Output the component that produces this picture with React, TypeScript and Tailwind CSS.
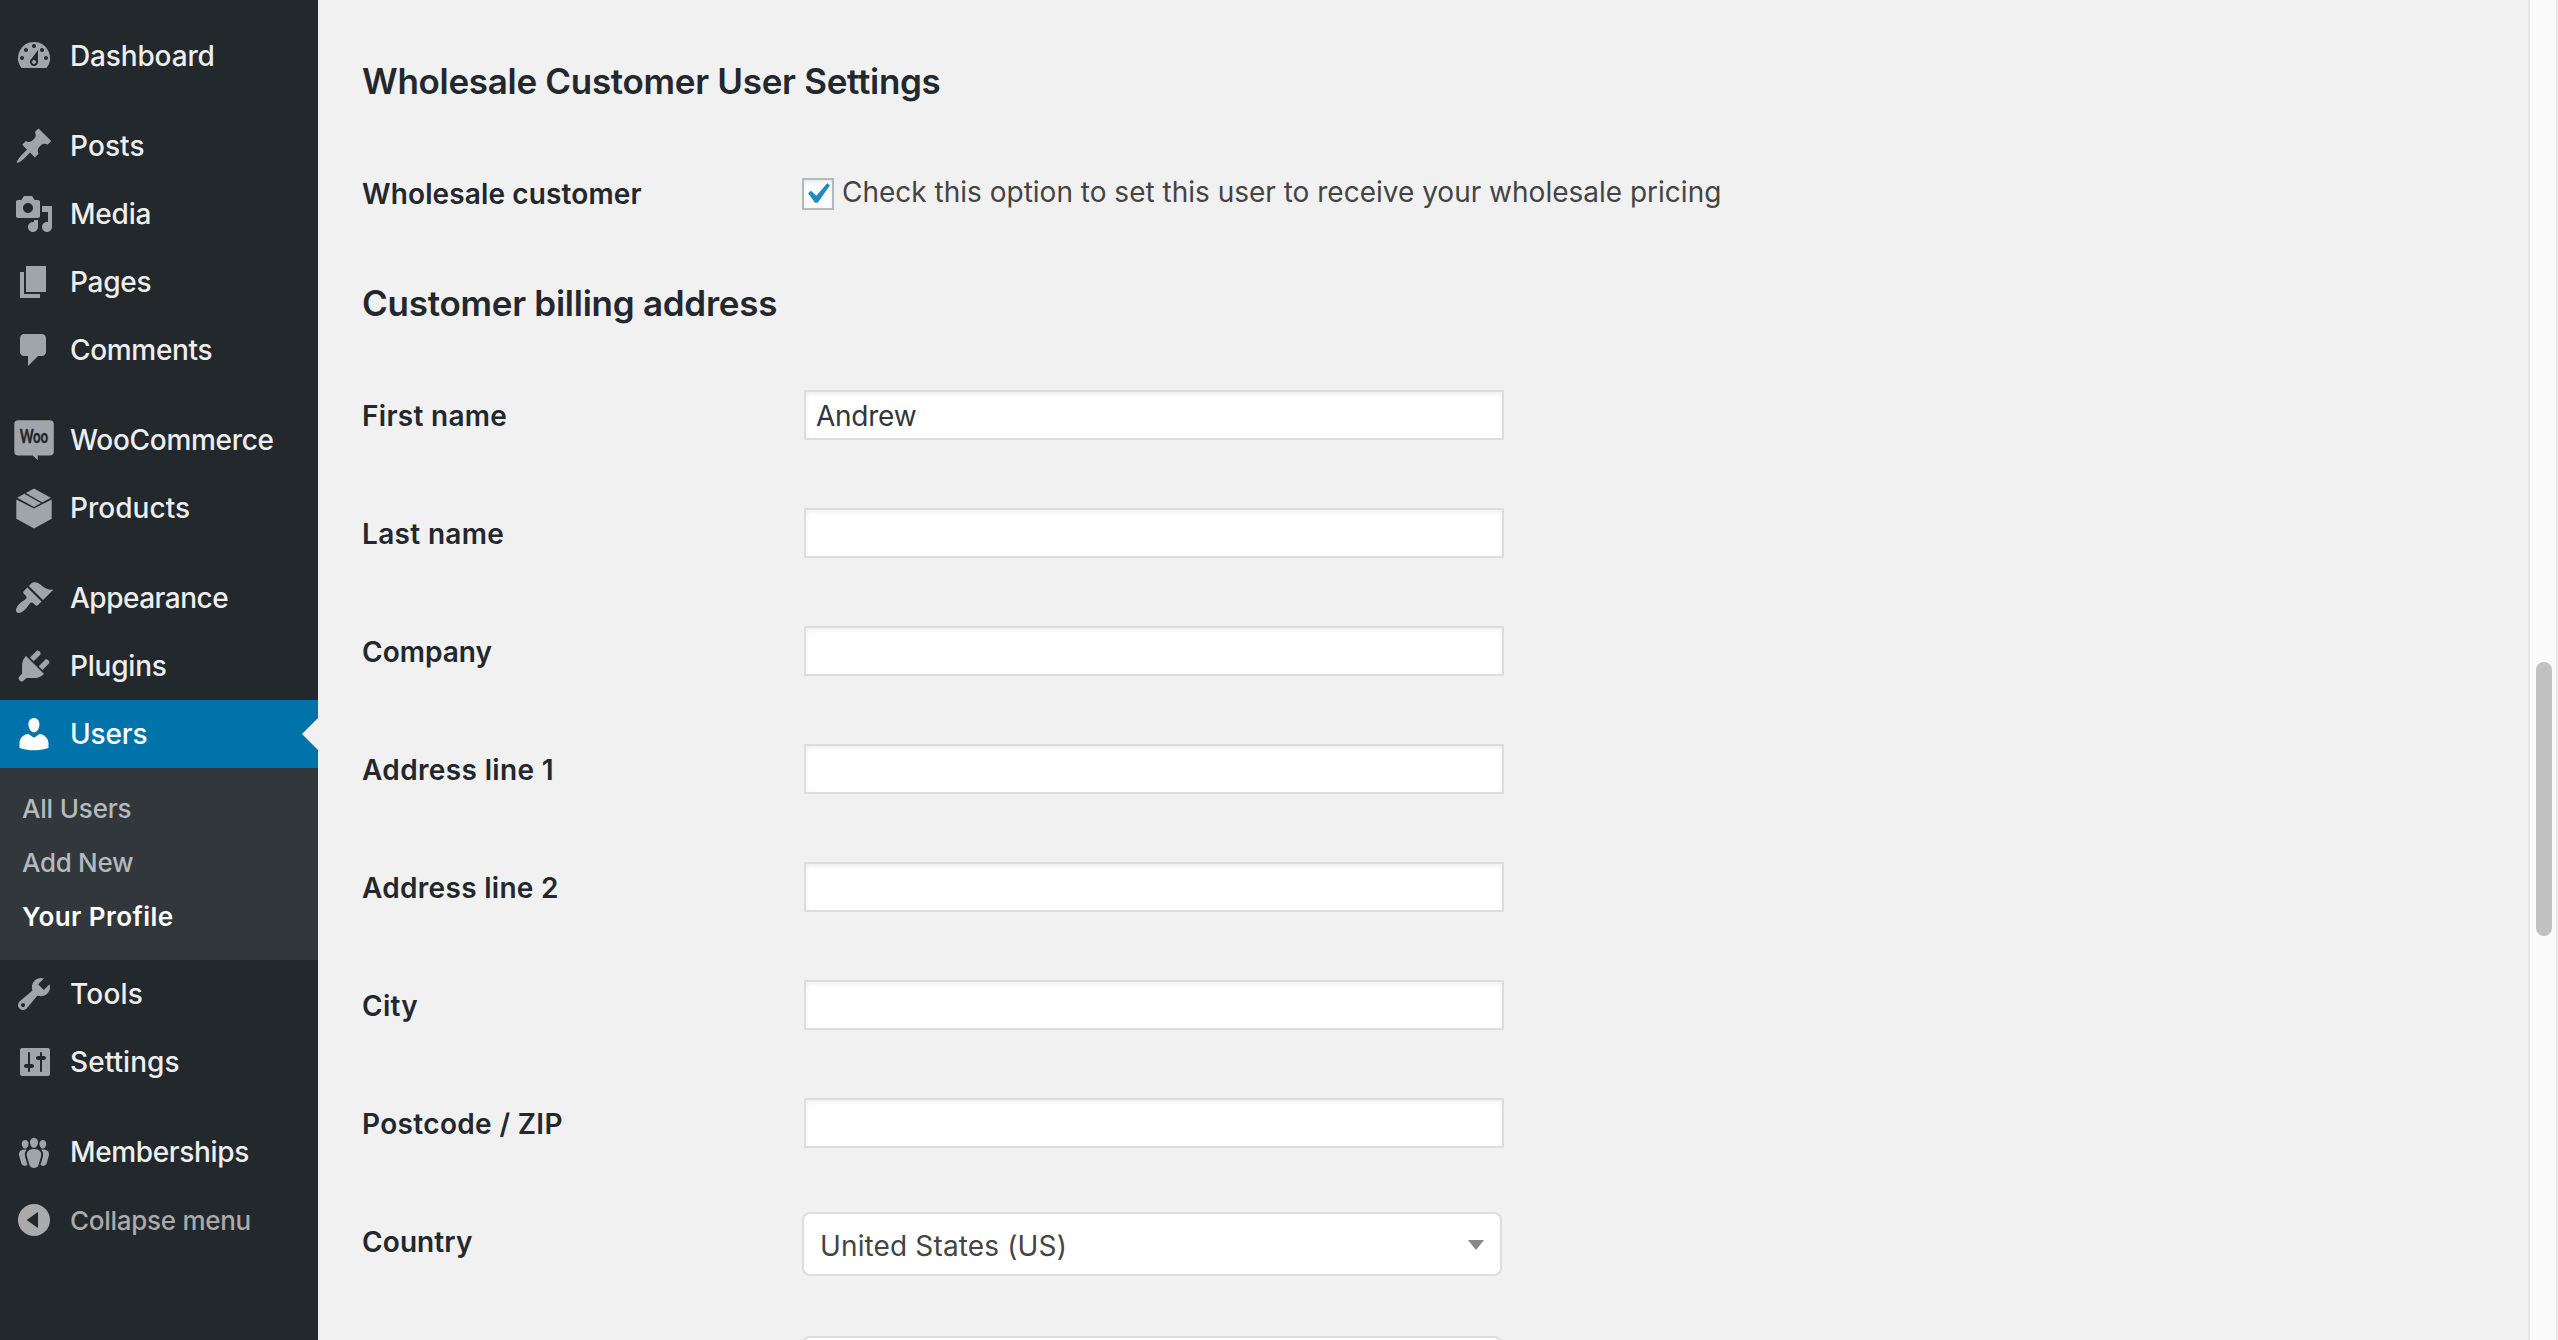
import type { ReactNode } from "react";

const paths = {
  dashboard:
    "M3.76 16h12.48A7.998 7.998 0 0 0 10 3a7.998 7.998 0 0 0-6.24 13zM10 4c.55 0 1 .45 1 1s-.45 1-1 1-1-.45-1-1 .45-1 1-1zM6 6c.55 0 1 .45 1 1s-.45 1-1 1-1-.45-1-1 .45-1 1-1zm8 0c.55 0 1 .45 1 1s-.45 1-1 1-1-.45-1-1 .45-1 1-1zm-5.37 5.55L12 7v6c0 1.1-.9 2-2 2s-2-.9-2-2c0-.57.24-1.08.63-1.45zM4 10c.55 0 1 .45 1 1s-.45 1-1 1-1-.45-1-1 .45-1 1-1zm12 0c.55 0 1 .45 1 1s-.45 1-1 1-1-.45-1-1 .45-1 1-1zm-5 3c0-.55-.45-1-1-1s-1 .45-1 1 .45 1 1 1 1-.45 1-1z",
  posts:
    "M10.44 3.02l1.82-1.82 6.36 6.35-1.83 1.82c-1.05-.68-2.48-.57-3.41.36l-.75.75c-.92.93-1.04 2.35-.35 3.41l-1.83 1.82-2.41-2.41-2.8 2.79c-.42.42-3.38 2.71-3.8 2.29s1.86-3.39 2.28-3.81l2.79-2.79L4.1 9.36l1.83-1.82c1.05.69 2.48.57 3.4-.36l.75-.75c.93-.92 1.05-2.35.36-3.41z",
  media:
    "M13 11V4c0-.55-.45-1-1-1h-1.67L9 1H5L3.67 3H2c-.55 0-1 .45-1 1v7c0 .55.45 1 1 1h10c.55 0 1-.45 1-1zM7 4.5c1.38 0 2.5 1.12 2.5 2.5S8.38 9.5 7 9.5 4.5 8.38 4.5 7 5.62 4.5 7 4.5zM14 6h5v10.5c0 1.38-1.12 2.5-2.5 2.5S14 17.88 14 16.5s1.12-2.5 2.5-2.5c.17 0 .34.02.5.05V9h-3V6zm-4 8.05V13h2v3.5c0 1.38-1.12 2.5-2.5 2.5S7 17.88 7 16.5 8.12 14 9.5 14c.17 0 .34.02.5.05z",
  pages: "M6 15V2h10v13H6zm-1 1h8v2H3V5h2v11z",
  comments: "M5 2h9c1.1 0 2 .9 2 2v7c0 1.1-.9 2-2 2h-2l-5 5v-5H5c-1.1 0-2-.9-2-2V4c0-1.1.9-2 2-2z",
  appearance:
    "M14.48 11.06L7.41 3.99l1.5-1.5c.5-.56 2.3-.47 3.51.32 1.21.8 1.43 1.28 2.91 2.1 1.18.64 2.45 1.26 4.45.85zm-.71.71L6.7 4.7 4.93 6.47c-.39.39-.39 1.02 0 1.41l1.06 1.06c.39.39.39 1.03 0 1.42-.6.6-1.43 1.11-2.21 1.69-.35.26-.7.53-1.01.84C1.43 14.23.4 16.08 1.4 17.07c.99 1 2.84-.03 4.18-1.36.31-.31.58-.66.85-1.02.57-.78 1.08-1.61 1.69-2.21.39-.39 1.02-.39 1.41 0l1.06 1.06c.39.39 1.02.39 1.41 0z",
  plugins:
    "M13.11 4.36L9.87 7.6 8 5.73l3.24-3.24c.35-.34 1.05-.2 1.56.32.52.51.66 1.21.31 1.55zm-8 1.77l.91-1.12 9.01 9.01-1.19.84c-.71.71-2.63 1.16-3.82 1.16H6.14L4.9 17.26c-.59.59-1.54.59-2.12 0-.59-.58-.59-1.53 0-2.12l1.24-1.24v-3.88c0-1.13.4-3.19 1.09-3.89zm7.26 3.97l3.24-3.24c.34-.35 1.04-.21 1.55.31.52.51.66 1.21.31 1.55l-3.24 3.25z",
  users:
    "M10 9.25c-2.27 0-2.73-3.44-2.73-3.44C7 4.02 7.82 2 9.97 2c2.16 0 2.98 2.02 2.71 3.81 0 0-.41 3.44-2.68 3.44zm0 2.57L12.72 10c2.39 0 4.52 2.33 4.52 4.53v2.49s-3.65 1.13-7.24 1.13c-3.65 0-7.24-1.13-7.24-1.13v-2.49c0-2.25 1.94-4.48 4.47-4.48z",
  tools:
    "M16.68 9.77c-1.34 1.34-3.3 1.67-4.95.99l-5.41 6.52c-.99.99-2.59.99-3.58 0s-.99-2.59 0-3.57l6.52-5.42c-.68-1.65-.35-3.61.99-4.95 1.28-1.28 3.12-1.62 4.72-1.06l-2.89 2.89 2.82 2.82 2.86-2.87c.53 1.58.18 3.39-1.08 4.65zM3.81 16.21c.4.39 1.04.39 1.43 0 .4-.4.4-1.04 0-1.43-.39-.4-1.03-.4-1.43 0-.39.39-.39 1.03 0 1.43z",
  settings:
    "M18 16V4c0-.55-.45-1-1-1H4c-.55 0-1 .45-1 1v12c0 .55.45 1 1 1h13c.55 0 1-.45 1-1zM8 11h1c.55 0 1 .45 1 1s-.45 1-1 1H8v1.5c0 .28-.22.5-.5.5s-.5-.22-.5-.5V13H6c-.55 0-1-.45-1-1s.45-1 1-1h1V5.5c0-.28.22-.5.5-.5s.5.22.5.5V11zm5-2h-1c-.55 0-1-.45-1-1s.45-1 1-1h1V5.5c0-.28.22-.5.5-.5s.5.22.5.5V7h1c.55 0 1 .45 1 1s-.45 1-1 1h-1v5.5c0 .28-.22.5-.5.5s-.5-.22-.5-.5V9z",
  memberships:
    "M8.03 4.46c-.29 1.28.55 3.46 1.97 3.46 1.41 0 2.25-2.18 1.96-3.46-.22-.98-1.08-1.63-1.96-1.63-.89 0-1.74.65-1.97 1.63zm-4.13.9c-.25 1.08.47 2.93 1.67 2.93s1.92-1.85 1.67-2.93c-.19-.83-.92-1.39-1.67-1.39s-1.48.56-1.67 1.39zm8.86 0c-.25 1.08.47 2.93 1.66 2.93 1.2 0 1.92-1.85 1.67-2.93-.19-.83-.92-1.39-1.67-1.39-.74 0-1.47.56-1.66 1.39zm-.59 11.43l1.25-4.3C14.2 10 12.71 8.47 10 8.47c-2.72 0-4.21 1.53-3.44 4.02l1.26 4.3C8.05 17.51 9 18 10 18c.98 0 1.94-.49 2.17-1.21zm-6.1-7.63c-.49.67-.96 1.83-.42 3.59l1.12 3.79c-.34.2-.77.31-1.2.31-.85 0-1.65-.41-1.85-1.03l-1.07-3.65c-.65-2.11.61-3.4 2.92-3.4.27 0 .54.02.79.06-.1.1-.2.22-.29.33zm8.35-.39c2.31 0 3.58 1.29 2.92 3.4l-1.07 3.65c-.2.62-1 1.03-1.85 1.03-.43 0-.86-.11-1.2-.31l1.11-3.77c.55-1.78.08-2.94-.42-3.61-.08-.11-.18-.23-.28-.33.25-.04.51-.06.79-.06z",
  collapse: "M10 2a8 8 0 1 0 0 16 8 8 0 0 0 0-16zM12 6v8l-5.7-4z",
};

function Glyph({ d }: { d: string }) {
  return (
    <svg viewBox="0 0 20 20" className="size-10 shrink-0" fill="currentColor" fillRule="evenodd">
      <path d={d} />
    </svg>
  );
}

function WooIcon() {
  return (
    <svg viewBox="0 0 40 40" className="size-10 shrink-0 overflow-visible" fill="currentColor">
      <path d="M4.3 0.2h31.5a4 4 0 0 1 4 4v27.4a4 4 0 0 1-4 4H23.8v4.7l-5-4.7H4.3a4 4 0 0 1-4-4V4.2a4 4 0 0 1 4-4z" />
      <text
        x="5.8"
        y="23.4"
        fontSize="18.5"
        textLength="28.4"
        lengthAdjust="spacingAndGlyphs"
        fill="#23282d"
        stroke="#23282d"
        strokeWidth="0.3"
        fontFamily="Lato, sans-serif"
        fontWeight="900"
      >
        Woo
      </text>
    </svg>
  );
}

function ProductsIcon() {
  return (
    <svg viewBox="0 0 40 40" className="size-10 shrink-0 overflow-visible" fill="currentColor">
      <path d="M2.3 11.6L20 20.6l17.7-9v19.2L20 40.5 2.3 30.8z" />
      <path d="M20 .4l16.8 9.3L20 19 3.2 9.7z" />
      <path d="M11 5.3L28 15" stroke="#23282d" strokeWidth="1.4" fill="none" />
    </svg>
  );
}

function Item({ icon, label, track }: { icon: ReactNode; label: string; track: string }) {
  return (
    <li className="flex h-[68px] items-center gap-4 pl-3.5 text-[#a0a5aa]">
      {icon}
      <span className={`text-[28px] font-medium text-[#eeeeee] ${track}`}>{label}</span>
    </li>
  );
}

function Sidebar() {
  return (
    <nav className="flex h-full w-[318px] shrink-0 flex-col gap-[22px] bg-[#23282d] pt-[22px] whitespace-nowrap">
      <ul>
        <Item icon={<Glyph d={paths.dashboard} />} label="Dashboard" track="tracking-[-0.15px]" />
      </ul>
      <ul>
        <Item icon={<Glyph d={paths.posts} />} label="Posts" track="tracking-[0.1px]" />
        <Item icon={<Glyph d={paths.media} />} label="Media" track="tracking-[-0.21px]" />
        <Item icon={<Glyph d={paths.pages} />} label="Pages" track="tracking-[-0.26px]" />
        <Item icon={<Glyph d={paths.comments} />} label="Comments" track="tracking-[-0.32px]" />
      </ul>
      <ul>
        <Item icon={<WooIcon />} label="WooCommerce" track="tracking-[-0.3px]" />
        <Item icon={<ProductsIcon />} label="Products" track="tracking-[0.03px]" />
      </ul>
      <ul>
        <Item icon={<Glyph d={paths.appearance} />} label="Appearance" track="tracking-[-0.5px]" />
        <Item icon={<Glyph d={paths.plugins} />} label="Plugins" track="tracking-[-0.22px]" />
        <li>
          <div className="relative flex h-[68px] items-center gap-4 bg-[#0073aa] pl-3.5 text-white">
            <Glyph d={paths.users} />
            <span className="text-[28px] font-medium tracking-[-0.14px]">Users</span>
            <span className="absolute top-[18px] right-0 size-0 border-y-16 border-r-16 border-y-transparent border-r-[#f1f1f1]" />
          </div>
          <ul className="h-[192px] bg-[#32373c] pt-3.5 pl-[22px] text-[26px] leading-[54px] font-medium text-[#b4b9be]">
            <li className="tracking-[-0.18px]">All Users</li>
            <li className="tracking-[-0.3px]">Add New</li>
            <li className="font-semibold tracking-[0.45px] text-white">Your Profile</li>
          </ul>
        </li>
        <Item icon={<Glyph d={paths.tools} />} label="Tools" track="tracking-[0.2px]" />
        <Item icon={<Glyph d={paths.settings} />} label="Settings" track="tracking-[0.06px]" />
      </ul>
      <ul>
        <Item icon={<Glyph d={paths.memberships} />} label="Memberships" track="tracking-[-0.36px]" />
        <li className="flex h-[68px] items-center gap-4 pl-3.5 text-[#aaaaaa]">
          <Glyph d={paths.collapse} />
          <span className="text-[26px] font-medium tracking-[-0.28px]">Collapse menu</span>
        </li>
      </ul>
    </nav>
  );
}

const fields = [
  { label: "First name", track: "tracking-[0.3px]", value: "Andrew" },
  { label: "Last name", track: "tracking-[0.33px]", value: "" },
  { label: "Company", track: "tracking-[0.03px]", value: "" },
  { label: "Address line 1", track: "tracking-[0.36px]", value: "" },
  { label: "Address line 2", track: "tracking-[0.3px]", value: "" },
  { label: "City", track: "tracking-[0.3px]", value: "" },
  { label: "Postcode / ZIP", track: "tracking-[0.34px]", value: "" },
];

function Label({ text, track }: { text: string; track: string }) {
  return <span className={`w-[440px] shrink-0 pt-0.5 text-[28px] font-semibold text-[#23282d] ${track}`}>{text}</span>;
}

function Profile() {
  return (
    <main className="h-full grow overflow-hidden pt-14 pl-11 whitespace-nowrap">
      <h2 className="text-[35px] leading-[50px] font-semibold tracking-[-0.3px] text-[#23282d]">
        Wholesale Customer User Settings
      </h2>
      <div className="flex h-[174px] items-center">
        <Label text="Wholesale customer" track="tracking-[0.13px]" />
        <span className="mt-0.5 flex size-8 items-center justify-center border-2 border-[#b4b9be] bg-white text-[#1e8cbe] shadow-[inset_0_2px_4px_rgba(0,0,0,0.1)]">
          <svg viewBox="0 0 20 20" className="mr-0.5 size-[42px] shrink-0" fill="currentColor">
            <path d="M14.83 4.89l1.34.94-5.81 8.38H9.02L5.78 9.67l1.34-1.25 2.57 2.4z" />
          </svg>
        </span>
        <span className="-mt-0.5 ml-2 text-[28px] text-[#444444]">
          Check this option to set this user to receive your wholesale pricing
        </span>
      </div>
      <h2 className="text-[35px] leading-[46px] font-semibold tracking-[-0.26px] text-[#23282d]">
        Customer billing address
      </h2>
      <div className="pt-[30px]">
        {fields.map((f) => (
          <div key={f.label} className="flex h-[118px] items-center">
            <Label text={f.label} track={f.track} />
            <div className="ml-0.5 flex h-[50px] w-[700px] items-center border-2 border-[#dddddd] bg-white pt-0.5 pl-2.5 text-[28px] tracking-[-0.25px] text-[#32373c] shadow-[inset_0_2px_4px_rgba(0,0,0,0.07)]">
              {f.value}
            </div>
          </div>
        ))}
        <div className="flex h-[118px] items-center">
          <Label text="Country" track="tracking-[0.1px]" />
          <div className="mt-1.5 flex h-16 w-[700px] items-center justify-between rounded-lg border-2 border-[#dddddd] bg-white px-4 text-[28px] tracking-[0.14px] text-[#444444]">
            <span className="pt-1">United States (US)</span>
            <span className="mt-0.5 size-0 border-x-8 border-t-10 border-x-transparent border-t-[#888888]" />
          </div>
        </div>
        <div className="mt-9 ml-[440px] h-16 w-[700px] rounded-lg border-2 border-[#dddddd] bg-white" />
      </div>
    </main>
  );
}

export default function App() {
  return (
    <div className="flex h-[1340px] w-[2558px] overflow-hidden bg-[#f1f1f1] font-['Inter',sans-serif]">
      <Sidebar />
      <Profile />
      <div className="flex h-full w-[30px] shrink-0 justify-center border-x-2 border-[#e8e8e8] bg-[#fafafa] pt-[662px]">
        <div className="ml-0.5 h-[274px] w-4 rounded-full bg-[#c1c1c1]" />
      </div>
    </div>
  );
}
